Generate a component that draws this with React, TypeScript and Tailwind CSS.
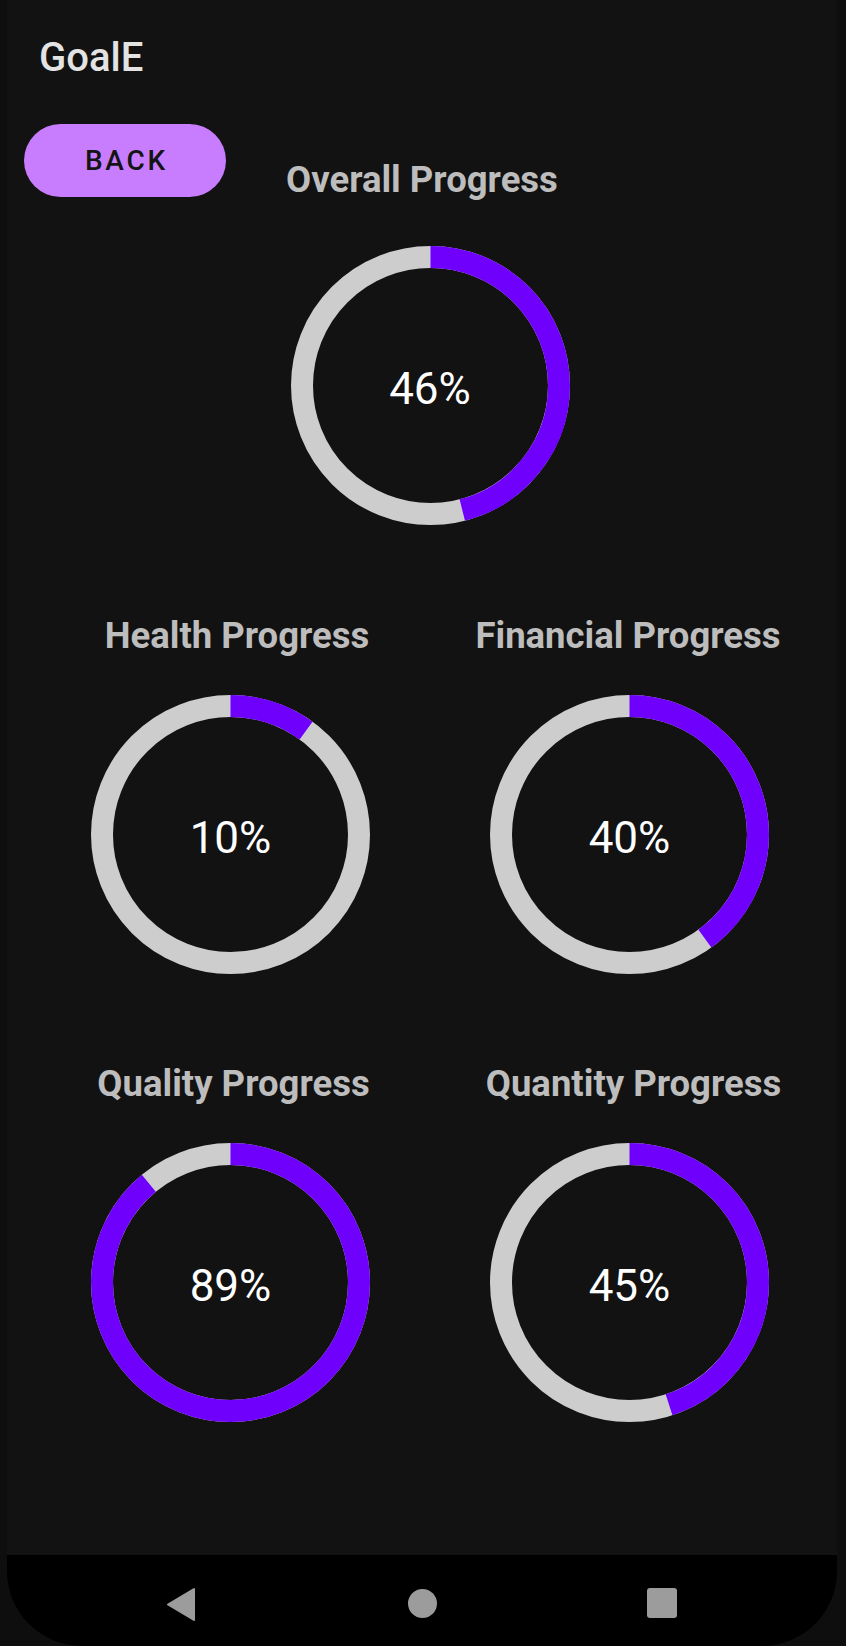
import React from "react";

const R = 128.5;
const C = 2 * Math.PI * R;

function Ring({ value }: { value: number }) {
  return (
    <div className="relative h-[279px] w-[279px]">
      <svg width="279" height="279" viewBox="0 0 279 279" className="block">
        <circle cx="139.5" cy="139.5" r={R} fill="none" stroke="#cdcdcd" strokeWidth="22" />
        <circle
          cx="139.5"
          cy="139.5"
          r={R}
          fill="none"
          stroke="#6e00fb"
          strokeWidth="22"
          strokeDasharray={`${(C * value) / 100} ${C}`}
          transform="rotate(-90 139.5 139.5)"
        />
      </svg>
      <div className="absolute inset-0 flex items-center justify-center pt-[6px]">
        <span className="text-[44px] leading-[44px] font-normal text-white">{value}%</span>
      </div>
    </div>
  );
}

function Cell({ label, value, shift }: { label: string; value: number; shift: string }) {
  return (
    <div className="flex flex-col items-center">
      <div className={`flex justify-center ${shift}`}>
        <span className="text-[36.5px] leading-[34px] font-bold text-[#bdbdbd]">{label}</span>
      </div>
      <div className="mt-[42px]">
        <Ring value={value} />
      </div>
    </div>
  );
}

export default function App() {
  return (
    <div
      className="flex h-[1646px] w-[846px] flex-col overflow-hidden bg-[#0e0e0e]"
      style={{ fontFamily: "Roboto, 'Noto Sans', sans-serif" }}
    >
      <div className="ml-[7px] flex w-[830px] flex-1 flex-col bg-[#121212]">
        <div className="pl-[32px] pt-[38px]">
          <span className="text-[40px] leading-[40px] font-medium text-[#e3e3e3]">GoalE</span>
        </div>
        <div className="mt-[46px] flex items-start pl-[17px]">
          <button className="flex h-[73px] w-[202px] items-center justify-center rounded-full bg-[#c77dfe]">
            <span className="pl-[3px] text-[28px] leading-[28px] font-medium tracking-[0.1em] text-[#141414]">
              BACK
            </span>
          </button>
          <div className="ml-[60px] mt-[38px]">
            <span className="text-[36.5px] leading-[35px] font-bold text-[#bdbdbd]">Overall Progress</span>
          </div>
        </div>
        <div className="mt-[47px] flex justify-center pl-[24px] pr-[8px]">
          <Ring value={46} />
        </div>
        <div className="mt-[94px] grid grid-cols-2 gap-y-[93px] pl-[24px] pr-[8px]">
          <Cell label="Health Progress" value={10} shift="pl-[13px]" />
          <Cell label="Financial Progress" value={40} shift="pr-[3px]" />
          <Cell label="Quality Progress" value={89} shift="pl-[6px]" />
          <Cell label="Quantity Progress" value={45} shift="pl-[8px]" />
        </div>
      </div>
      <div className="ml-[7px] flex h-[91px] w-[830px] items-start rounded-b-[75px] bg-black pt-[32px]">
        <svg width="30" height="35" viewBox="0 0 30 35" className="ml-[159px] block">
          <polygon points="2,17.5 28,2 28,33" fill="#9c9c9c" stroke="#9c9c9c" strokeWidth="2" strokeLinejoin="round" />
        </svg>
        <div className="ml-[212px] mt-[2px] h-[29px] w-[29px] rounded-full bg-[#9c9c9c]" />
        <div className="ml-[210px] mt-[1px] h-[30px] w-[30px] rounded-[3px] bg-[#9c9c9c]" />
      </div>
    </div>
  );
}
